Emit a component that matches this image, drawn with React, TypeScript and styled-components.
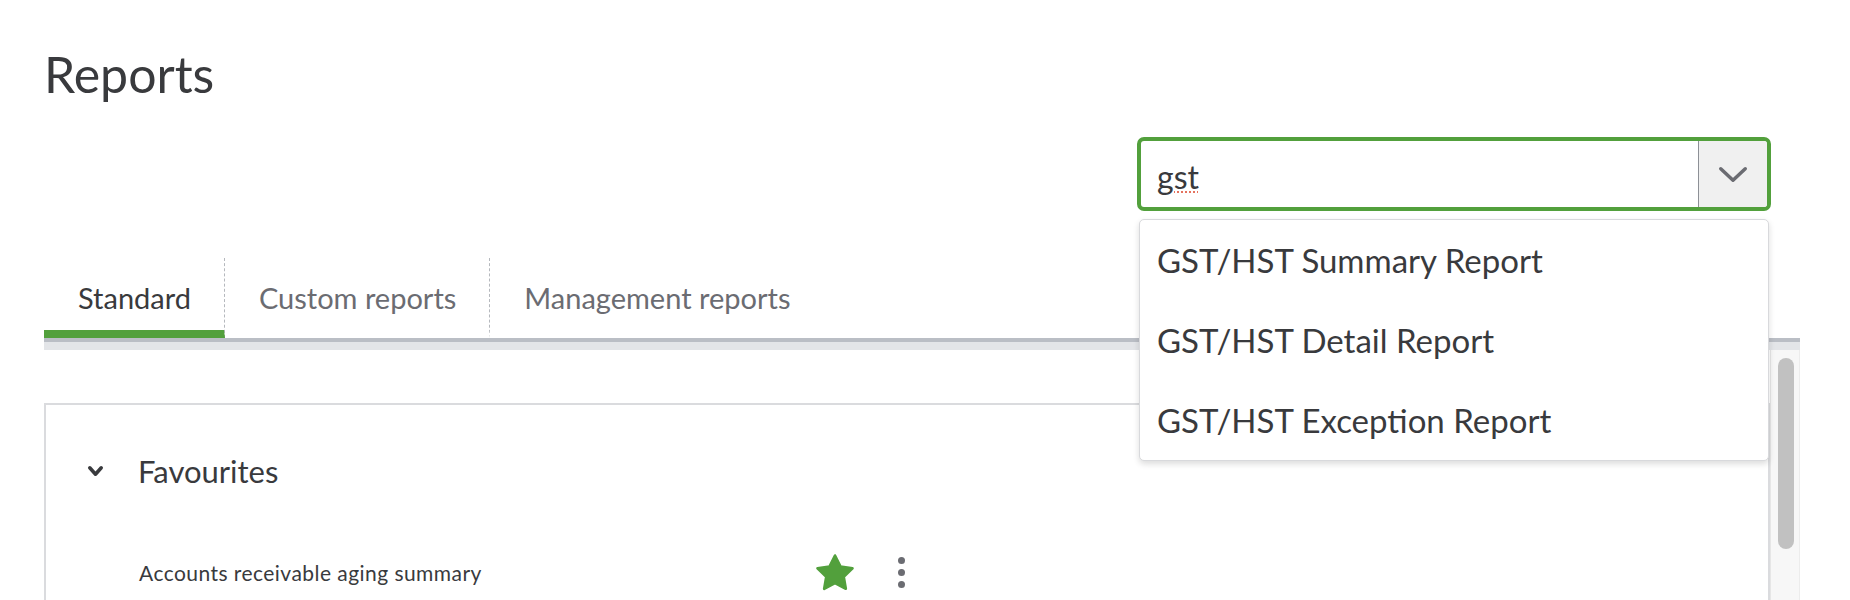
import { ReactElement } from "react";
import styled, { createGlobalStyle } from "styled-components";

const GlobalStyle = createGlobalStyle`
  html, body {
    margin: 0;
    padding: 0;
    overflow: hidden;
    background: #fff;
  }
  body {
    font-family: Lato, "Open Sans", sans-serif;
    color: #393a3d;
  }
`;

const GREEN = "#52a03c";

const Page = styled.div`
  height: 100vh;
  display: flex;
  flex-direction: column;
  padding: 0 50px 0 44px;
  box-sizing: border-box;
`;

const Title = styled.h1`
  margin: 44px 0 0;
  font-size: 50px;
  font-weight: 400;
  line-height: 1.2;
  color: #393a3d;
`;

const SearchRow = styled.div`
  display: flex;
  justify-content: flex-end;
  margin-top: 33px;
  padding-right: 29px;
`;

const Combo = styled.div`
  position: relative;
  width: 634px;
`;

const ComboField = styled.div`
  display: flex;
  height: 74px;
  box-sizing: border-box;
  border: 4px solid ${GREEN};
  border-radius: 7px;
  overflow: hidden;
`;

const ComboInput = styled.div`
  flex: 1;
  display: flex;
  align-items: center;
  padding: 4px 0 0 16px;
  font-size: 32px;
  color: #393a3d;
`;

const Misspelled = styled.span`
  text-decoration: underline dotted #e5735f;
  text-decoration-thickness: 2px;
  text-underline-offset: 3px;
`;

const ComboButton = styled.div`
  width: 68px;
  display: flex;
  align-items: center;
  justify-content: center;
  background: #f0f0f0;
  border-left: 1px solid #8d9096;
`;

const Menu = styled.ul`
  position: absolute;
  top: calc(100% + 8px);
  left: 2px;
  right: 2px;
  margin: 0;
  padding: 0;
  list-style: none;
  background: #fff;
  border: 1px solid #d8d9dc;
  border-radius: 5px;
  box-shadow: 0 3px 6px rgba(0, 0, 0, 0.14);
  z-index: 10;
`;

const MenuItem = styled.li`
  height: 80px;
  display: flex;
  align-items: center;
  padding-left: 17px;
  font-size: 33px;
  color: #393a3d;
`;

const Tabs = styled.div`
  display: flex;
  margin-top: 47px;
  border-bottom: 4px solid #babec5;
`;

const Tab = styled.div<{ $active?: boolean; $divider?: boolean }>`
  padding: 23px 33px 14px 34px;
  font-size: 29px;
  line-height: 1.2;
  color: ${(p) => (p.$active ? "#393a3d" : "#6b6c72")};
  border-bottom: 8px solid ${(p) => (p.$active ? GREEN : "transparent")};
  border-right: 1px dashed ${(p) => (p.$divider ? "#b5b8bd" : "transparent")};
`;

const TabShade = styled.div`
  height: 8px;
  background: #e3e5e8;
`;

const ScrollArea = styled.div`
  flex: 1;
  display: flex;
  overflow: hidden;
`;

const ScrollContent = styled.div`
  flex: 1;
  padding-top: 53px;
`;

const ScrollTrack = styled.div`
  width: 30px;
  box-sizing: border-box;
  background: #f7f7f7;
  border-left: 1px solid #e6e6e6;
  border-right: 1px solid #ececec;
  padding: 8px 0 0 7px;
`;

const ScrollThumb = styled.div`
  width: 16px;
  height: 191px;
  border-radius: 8px;
  background: #c1c1c1;
`;

const Card = styled.section`
  border: 2px solid #dadbde;
  border-bottom: none;
  min-height: 400px;
  padding: 48px 0 0 41px;
`;

const SectionHeader = styled.div`
  display: flex;
  align-items: center;
  gap: 34px;
  font-size: 31px;
  line-height: 1.2;
  color: #393a3d;
`;

const ReportRow = styled.div`
  display: flex;
  align-items: center;
  margin-top: 62px;
  padding-left: 52px;
`;

const ReportName = styled.div`
  width: 675px;
  font-size: 21px;
  letter-spacing: 0.45px;
  color: #393a3d;
`;

const Kebab = styled.div`
  display: flex;
  flex-direction: column;
  gap: 5px;
  margin-left: 42px;
`;

const Dot = styled.span`
  width: 7px;
  height: 7px;
  border-radius: 50%;
  background: #6b6c72;
`;

const suggestions = [
  "GST/HST Summary Report",
  "GST/HST Detail Report",
  "GST/HST Exception Report",
];

const ChevronDown = ({ w, h, stroke, color }: { w: number; h: number; stroke: number; color: string }) => (
  <svg width={w} height={h} viewBox={`0 0 ${w} ${h}`} fill="none">
    <path
      d={`M${stroke / 2 + 1} ${stroke / 2 + 1} L${w / 2} ${h - stroke / 2 - 1} L${w - stroke / 2 - 1} ${stroke / 2 + 1}`}
      stroke={color}
      strokeWidth={stroke}
      strokeLinecap="round"
      strokeLinejoin="round"
    />
  </svg>
);

const Star = () => (
  <svg width="42" height="42" viewBox="0 0 24 24">
    <path
      d="M12 2l3.09 6.26L22 9.27l-5 4.87 1.18 6.88L12 17.77l-6.18 3.25L7 14.14 2 9.27l6.91-1.01L12 2z"
      fill={GREEN}
      stroke={GREEN}
      strokeWidth="1.5"
      strokeLinejoin="round"
    />
  </svg>
);

export default function App(): ReactElement {
  return (
    <>
      <GlobalStyle />
      <Page>
        <Title>Reports</Title>
        <SearchRow>
          <Combo>
            <ComboField>
              <ComboInput>
                <Misspelled>gst</Misspelled>
              </ComboInput>
              <ComboButton>
                <ChevronDown w={30} h={17} stroke={3.5} color="#6b6c72" />
              </ComboButton>
            </ComboField>
            <Menu>
              {suggestions.map((s) => (
                <MenuItem key={s}>{s}</MenuItem>
              ))}
            </Menu>
          </Combo>
        </SearchRow>
        <Tabs>
          <Tab $active $divider>Standard</Tab>
          <Tab $divider>Custom reports</Tab>
          <Tab>Management reports</Tab>
        </Tabs>
        <TabShade />
        <ScrollArea>
          <ScrollContent>
            <Card>
              <SectionHeader>
                <ChevronDown w={17} h={12} stroke={3.5} color="#393a3d" />
                Favourites
              </SectionHeader>
              <ReportRow>
                <ReportName>Accounts receivable aging summary</ReportName>
                <Star />
                <Kebab>
                  <Dot />
                  <Dot />
                  <Dot />
                </Kebab>
              </ReportRow>
            </Card>
          </ScrollContent>
          <ScrollTrack>
            <ScrollThumb />
          </ScrollTrack>
        </ScrollArea>
      </Page>
    </>
  );
}
